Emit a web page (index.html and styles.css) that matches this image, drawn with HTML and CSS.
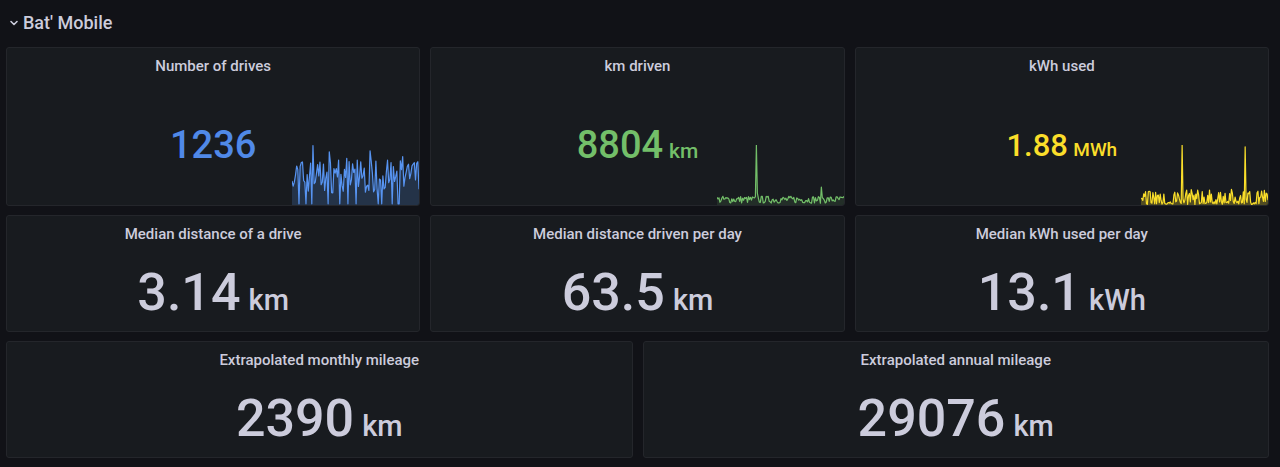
FILE: index.html
```html
<!DOCTYPE html>
<html lang="en">
<head>
  <meta charset="UTF-8">
  <title>Bat' Mobile</title>
  <link rel="stylesheet" href="styles.css">
</head>
<body>
  <!-- Row header -->
  <div class="row-header">
    <svg class="chevron" width="10" height="10" viewBox="0 0 10 10">
      <path d="M2 3.5 L5 6.5 L8 3.5" fill="none" stroke="#ccccdc" stroke-width="1.6" stroke-linecap="round" stroke-linejoin="round"/>
    </svg>
    <span class="row-title">Bat' Mobile</span>
  </div>

  <div class="dashboard">
    <!-- Row 1: stats with sparklines -->
    <div class="panel span-2">
      <div class="panel-title">Number of drives</div>
      <div class="panel-body">
        <div class="stat small blue"><span class="num">1236</span></div>
        <svg class="spark" id="spark-drives" viewBox="0 0 127 60" preserveAspectRatio="none"></svg>
      </div>
    </div>
    <div class="panel span-2">
      <div class="panel-title">km driven</div>
      <div class="panel-body">
        <div class="stat small green"><span class="num">8804</span><span class="unit">km</span></div>
        <svg class="spark" id="spark-km" viewBox="0 0 127 60" preserveAspectRatio="none"></svg>
      </div>
    </div>
    <div class="panel span-2">
      <div class="panel-title">kWh used</div>
      <div class="panel-body">
        <div class="stat smaller yellow"><span class="num">1.88</span><span class="unit">MWh</span></div>
        <svg class="spark" id="spark-kwh" viewBox="0 0 127 60" preserveAspectRatio="none"></svg>
      </div>
    </div>

    <!-- Row 2: medians -->
    <div class="panel span-2">
      <div class="panel-title">Median distance of a drive</div>
      <div class="panel-body">
        <div class="stat big"><span class="num">3.14</span><span class="unit">km</span></div>
      </div>
    </div>
    <div class="panel span-2">
      <div class="panel-title">Median distance driven per day</div>
      <div class="panel-body">
        <div class="stat big"><span class="num">63.5</span><span class="unit">km</span></div>
      </div>
    </div>
    <div class="panel span-2">
      <div class="panel-title">Median kWh used per day</div>
      <div class="panel-body">
        <div class="stat big"><span class="num">13.1</span><span class="unit">kWh</span></div>
      </div>
    </div>

    <!-- Row 3: extrapolations -->
    <div class="panel span-3">
      <div class="panel-title">Extrapolated monthly mileage</div>
      <div class="panel-body">
        <div class="stat big"><span class="num">2390</span><span class="unit">km</span></div>
      </div>
    </div>
    <div class="panel span-3">
      <div class="panel-title">Extrapolated annual mileage</div>
      <div class="panel-body">
        <div class="stat big"><span class="num">29076</span><span class="unit">km</span></div>
      </div>
    </div>
  </div>

  <script>
    // small seeded random so the sparklines look the same every time
    var seed = 7;
    function rnd() {
      seed = (seed * 16807) % 2147483647;
      return (seed - 1) / 2147483646;
    }

    function drawSpark(id, values, color, fillOpacity) {
      var svg = document.getElementById(id);
      var w = 127, h = 60;
      var step = w / (values.length - 1);
      var line = "";
      for (var i = 0; i < values.length; i++) {
        var x = (i * step).toFixed(2);
        var y = (h - values[i] * h).toFixed(2);
        line += (i === 0 ? "M" : "L") + x + " " + y + " ";
      }
      var area = line + "L" + w + " " + h + " L0 " + h + " Z";
      svg.innerHTML =
        '<path d="' + area + '" fill="' + color + '" fill-opacity="' + fillOpacity + '"/>' +
        '<path d="' + line + '" fill="none" stroke="' + color + '" stroke-width="1.2" stroke-linejoin="round"/>';
    }

    // Number of drives: noisy all over the range
    var drives = [];
    for (var i = 0; i < 110; i++) {
      var v = 0.2 + rnd() * 0.55;
      if (rnd() > 0.85) v += 0.2;
      if (rnd() > 0.92) v = 0.02;
      drives.push(Math.min(v, 0.98));
    }
    drives[18] = 0.99;
    drawSpark("spark-drives", drives, "#5794f2", 0.2);

    // km driven: flat with one big spike
    var km = [];
    for (var i = 0; i < 130; i++) {
      km.push(0.03 + rnd() * 0.12);
    }
    km[40] = 1.0;
    km[41] = 0.2;
    km[106] = 0.3;
    km[107] = 0.12;
    drawSpark("spark-km", km, "#73bf69", 0.12);

    // kWh used: spiky bars near the bottom
    var kwh = [];
    for (var i = 0; i < 140; i++) {
      var k = rnd() > 0.5 ? 0.04 + rnd() * 0.22 : 0.01 + rnd() * 0.05;
      kwh.push(k);
    }
    kwh[45] = 1.0;
    kwh[46] = 0.1;
    kwh[114] = 0.97;
    kwh[115] = 0.1;
    drawSpark("spark-kwh", kwh, "#fade2a", 0.25);
  </script>
</body>
</html>
```

FILE: styles.css
```css
body {
  margin: 0;
  background-color: #111217;
  font-family: Roboto, "Liberation Sans", sans-serif;
  color: #ccccdc;
  height: 467px;
  overflow: hidden;
}
.row-header {
  display: flex;
  align-items: center;
  height: 44px;
  padding-left: 9px;
  gap: 4px;
}
.chevron {
  margin-top: 1px;
}
.row-title {
  font-size: 18px;
  font-weight: 500;
}
.dashboard {
  display: grid;
  grid-template-columns: repeat(6, 1fr);
  grid-template-rows: 159px 117px 117px;
  gap: 9px 10px;
  padding: 3px 11px 0 6px;
}
.span-2 {
  grid-column: span 2;
}
.span-3 {
  grid-column: span 3;
}
.panel {
  display: flex;
  flex-direction: column;
  background-color: #181b1f;
  border: 1px solid #24262b;
  border-radius: 3px;
  overflow: hidden;
}
.panel-title {
  height: 37px;
  line-height: 36px;
  text-align: center;
  font-size: 15px;
  font-weight: 500;
  color: #ccccdc;
}
.panel-body {
  flex: 1;
  display: grid;
  grid-template: 1fr / 1fr;
  min-height: 0;
}
.panel-body > * {
  grid-area: 1 / 1;
}
.stat {
  place-self: center;
  white-space: nowrap;
  color: #ccccdc;
  font-weight: 500;
  line-height: 1;
}
.stat .unit {
  margin-left: 0.28em;
}
.stat.small .num {
  font-size: 38px;
}
.stat.small .unit {
  font-size: 21px;
}
.stat.smaller .num {
  font-size: 31px;
}
.stat.smaller .unit {
  font-size: 19px;
}
.stat.big .num {
  font-size: 52px;
}
.stat.big .unit {
  font-size: 29px;
}
.stat.big {
  margin-top: 2px;
}
.blue {
  color: #5089e8;
}
.green {
  color: #73bf69;
}
.yellow {
  color: #fade2a;
}
.spark {
  align-self: end;
  justify-self: end;
  width: 127px;
  height: 60px;
  display: block;
}
```
